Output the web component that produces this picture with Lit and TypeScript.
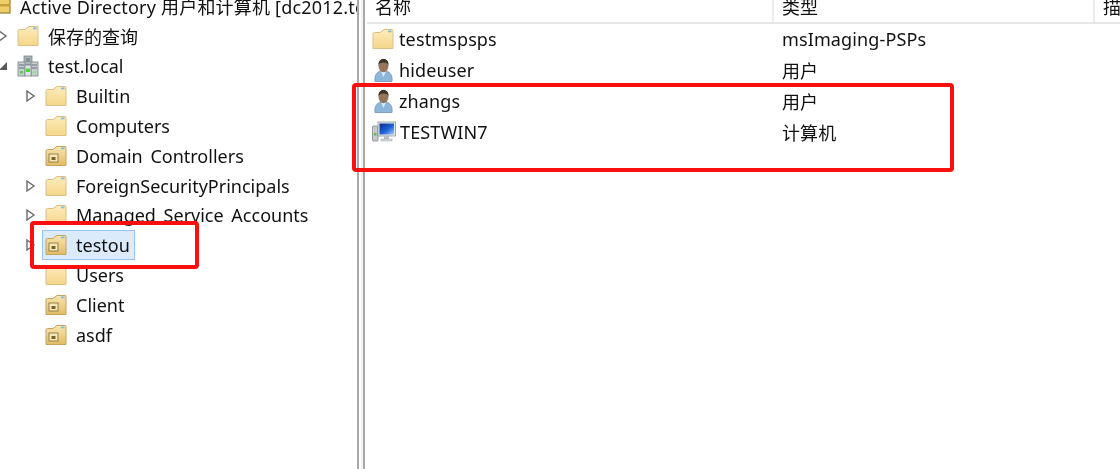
import { LitElement, html, css, svg } from "lit";
import { customElement } from "lit/decorators.js";

const folderDefs = svg`<defs>
  <linearGradient id="fg" x1="0" y1="0" x2="0" y2="1"><stop offset="0" stop-color="#fcecbc"/><stop offset="1" stop-color="#f5d68a"/></linearGradient>
  <linearGradient id="og" x1="0" y1="0" x2="0" y2="1"><stop offset="0" stop-color="#f9e6b0"/><stop offset="1" stop-color="#e3bb66"/></linearGradient>
  <linearGradient id="sc" x1="0" y1="0" x2="1" y2="1"><stop offset="0" stop-color="#0a2a8c"/><stop offset=".55" stop-color="#1f62d8"/><stop offset="1" stop-color="#a6cdf5"/></linearGradient>
</defs>`;

const folder = html`<svg class="ico" viewBox="0 0 22 22">${folderDefs}
  <path d="M1 6 Q1 4.5 2.5 4.5 L8 4.5 L12 1.5 L20 1.5 Q21 1.5 21 2.5 L21 20.5 L1 20.5 Z" fill="url(#fg)" stroke="#dcc083" stroke-width="1"/>
  <rect x="16" y="2.5" width="3.5" height="1.8" fill="#7fbce4"/>
</svg>`;

const ou = html`<svg class="ico" viewBox="0 0 22 22">${folderDefs}
  <path d="M1 6 Q1 4.5 2.5 4.5 L8 4.5 L12 1.5 L20 1.5 Q21 1.5 21 2.5 L21 20.5 L1 20.5 Z" fill="url(#og)" stroke="#c4a35c" stroke-width="1"/>
  <rect x="16" y="2.5" width="3.5" height="1.8" fill="#7fbce4"/>
  <rect x="4" y="9" width="9" height="8" fill="#f4e7bd" stroke="#8f7a3a" stroke-width=".9"/>
  <rect x="6.5" y="12" width="4" height="3" fill="#7a6320"/>
</svg>`;

const domain = html`<svg class="ico" viewBox="0 0 22 22">
  <rect x="7" y="1" width="8" height="9" fill="#a9b3b8" stroke="#7b868c" stroke-width=".8"/>
  <rect x="1" y="7" width="7" height="14" fill="#c6ced2" stroke="#7b868c" stroke-width=".8"/>
  <rect x="14" y="7" width="7" height="14" fill="#c6ced2" stroke="#7b868c" stroke-width=".8"/>
  <rect x="8" y="10" width="6" height="11" fill="#dfe4e6" stroke="#7b868c" stroke-width=".8"/>
  <path d="M2 10h5M15 10h5M2 13h5M15 13h5M9 4h4M9 6h4" stroke="#626d73" stroke-width="1"/>
  <rect x="9" y="13.5" width="4" height="3.5" fill="#55d13c"/>
  <rect x="3" y="16" width="3" height="2.5" fill="#55d13c"/>
  <rect x="16" y="16" width="3" height="2.5" fill="#9fdc80"/>
</svg>`;

const user = html`<svg class="ico tall" viewBox="0 0 22 24">
  <path d="M3 23.5 C2 16 6.5 12.5 11.5 12.5 C16.5 12.5 21 16 20 23.5 Z" fill="#8db6da" stroke="#6b94ba" stroke-width=".8"/>
  <path d="M9 13 L11.5 19 L14 13 Z" fill="#e2eef8"/>
  <ellipse cx="11.5" cy="7.5" rx="5" ry="6.8" fill="#96755a"/>
  <path d="M6.5 7 C6 -1 17 -1 16.5 7 C14.5 3.8 8.5 3.8 6.5 7 Z" fill="#3f342a"/>
</svg>`;

const computer = html`<svg class="ico wide" viewBox="0 0 24 22">${folderDefs}
  <rect x="0.5" y="5" width="5.5" height="15" rx="1" fill="#c4cacc" stroke="#7f888c" stroke-width=".8"/>
  <rect x="2" y="12" width="2.5" height="2.5" fill="#5ac24a"/>
  <rect x="6" y="1" width="17.5" height="14" fill="#e6eaec" stroke="#8b9498" stroke-width=".8"/>
  <rect x="7.5" y="2.5" width="14.5" height="11" fill="url(#sc)"/>
  <rect x="12" y="15" width="5" height="3" fill="#b8bfc2"/>
  <rect x="9" y="18" width="11" height="2" fill="#d5d9db" stroke="#9aa2a6" stroke-width=".5"/>
</svg>`;

const adIcon = html`<svg class="ico" viewBox="0 0 22 22">
  <rect x="1" y="-4" width="20" height="22" fill="#efcf6c" stroke="#9c7d28" stroke-width="1.2"/>
  <rect x="1" y="9" width="20" height="2.5" fill="#c8a03a"/>
</svg>`;

const open = html`<svg class="tw" viewBox="0 0 12 14"><path d="M2 2 L9 7 L2 12 Z" fill="#fff" stroke="#6a6a6a" stroke-width="1.4"/></svg>`;
const expanded = html`<svg class="tw" viewBox="0 0 12 14"><path d="M10 3 L10 11 L2 11 Z" fill="#595959"/></svg>`;
const none = html`<span class="tw"></span>`;

interface TreeRow { tw: unknown; icon: unknown; label: string; indent?: boolean; selected?: boolean; }

const tree: TreeRow[] = [
  { tw: open, icon: folder, label: "保存的查询" },
  { tw: expanded, icon: domain, label: "test.local" },
  { tw: open, icon: folder, label: "Builtin", indent: true },
  { tw: none, icon: folder, label: "Computers", indent: true },
  { tw: none, icon: ou, label: "Domain Controllers", indent: true },
  { tw: open, icon: folder, label: "ForeignSecurityPrincipals", indent: true },
  { tw: open, icon: folder, label: "Managed Service Accounts", indent: true },
  { tw: open, icon: ou, label: "testou", indent: true, selected: true },
  { tw: none, icon: folder, label: "Users", indent: true },
  { tw: none, icon: ou, label: "Client", indent: true },
  { tw: none, icon: ou, label: "asdf", indent: true },
];

const rows = [
  { icon: folder, name: "testmspsps", type: "msImaging-PSPs" },
  { icon: user, name: "hideuser", type: "用户" },
  { icon: user, name: "zhangs", type: "用户" },
  { icon: computer, name: "TESTWIN7", type: "计算机" },
];

@customElement("app-root")
export class AppRoot extends LitElement {
  static styles = css`
    :host {
      display: block;
      width: 1120px;
      height: 469px;
      overflow: hidden;
      position: relative;
      background: #fff;
      color: #111;
      font-family: "Noto Sans", "Noto Sans CJK SC", sans-serif;
      font-size: 18px;
    }
    .page {
      display: grid;
      grid-template-columns: 357px 8px 1fr;
      height: 469px;
      filter: blur(0.45px);
    }
    .tree { margin-top: -8px; min-width: 0; }
    .trow {
      display: flex;
      align-items: center;
      height: 29.8px;
      box-sizing: border-box;
      white-space: nowrap;
      overflow: hidden;
      word-spacing: 3px;
    }
    .title { padding-bottom: 2px; word-spacing: 0; letter-spacing: 0.2px; }
    .title .ico { margin-left: -11px; }
    .title .label { flex: none; }
    .trow.l1 .tw { margin-left: -3px; margin-right: 8px; }
    .trow.l1 { padding-bottom: 1px; }
    .trow.l2 { padding-left: 25px; }
    .trow.l2 .tw { margin-right: 8px; }
    .tw { width: 12px; height: 14px; flex: none; display: block; }
    .ico { width: 22px; height: 22px; flex: none; display: block; }
    .ico.wide { width: 24px; }
    .ico.tall { height: 24px; }
    .label { margin-left: 9px; }
    .sel {
      display: flex;
      align-items: center;
      height: 100%;
      margin-left: -3px;
      padding: 0 4px 0 2px;
      box-sizing: border-box;
      background: #dcebfb;
      border: 1px solid #99c4ee;
    }
    .split {
      border-left: 2px solid #a9a9a9;
      border-right: 2px solid #a9a9a9;
      background: #f1f1f1;
      box-shadow: inset 2px 0 0 #fff;
    }
    .list { min-width: 0; padding-left: 2px; }
    .head {
      display: grid;
      grid-template-columns: 407px 321px 1fr;
      height: 22px;
      margin-bottom: -1px;
      border-bottom: 2px solid #e6e6e6;
      box-sizing: content-box;
      overflow: hidden;
    }
    .head div {
      padding-left: 8px;
      line-height: 14px;
      border-right: 2px solid #ececec;
      white-space: nowrap;
    }
    .head div:last-child { border-right: 0; }
    .lrow {
      display: grid;
      grid-template-columns: 407px 1fr;
      height: 31px;
      align-items: center;
      letter-spacing: 0.12px;
    }
    .cell { display: flex; align-items: center; padding-left: 5px; }
    .cell .ico { margin-right: 5px; }
    .cell .ico.wide { margin-right: 4px; }
    .type { padding-left: 8px; }
    .mark {
      position: absolute;
      box-sizing: border-box;
      border: 4px solid #fb0f0f;
      border-radius: 4px;
      pointer-events: none;
    }
    .m1 { left: 30px; top: 221px; width: 169px; height: 48px; }
    .m2 { left: 352px; top: 83px; width: 602px; height: 89px; }
  `;

  render() {
    return html`
      <div class="page">
        <div class="tree">
          <div class="trow title">${adIcon}<span class="label">Active Directory 用户和计算机 [dc2012.te</span></div>
          ${tree.map(
            (r) => html`<div class="trow ${r.indent ? "l2" : "l1"}">
              ${r.tw}
              ${r.selected
                ? html`<div class="sel">${r.icon}<span class="label">${r.label}</span></div>`
                : html`${r.icon}<span class="label">${r.label}</span>`}
            </div>`
          )}
        </div>
        <div class="split"></div>
        <div class="list">
          <div class="head"><div>名称</div><div>类型</div><div>描</div></div>
          ${rows.map(
            (r) => html`<div class="lrow">
              <div class="cell">${r.icon}<span>${r.name}</span></div>
              <div class="type">${r.type}</div>
            </div>`
          )}
        </div>
      </div>
      <div class="mark m1"></div>
      <div class="mark m2"></div>
    `;
  }
}
